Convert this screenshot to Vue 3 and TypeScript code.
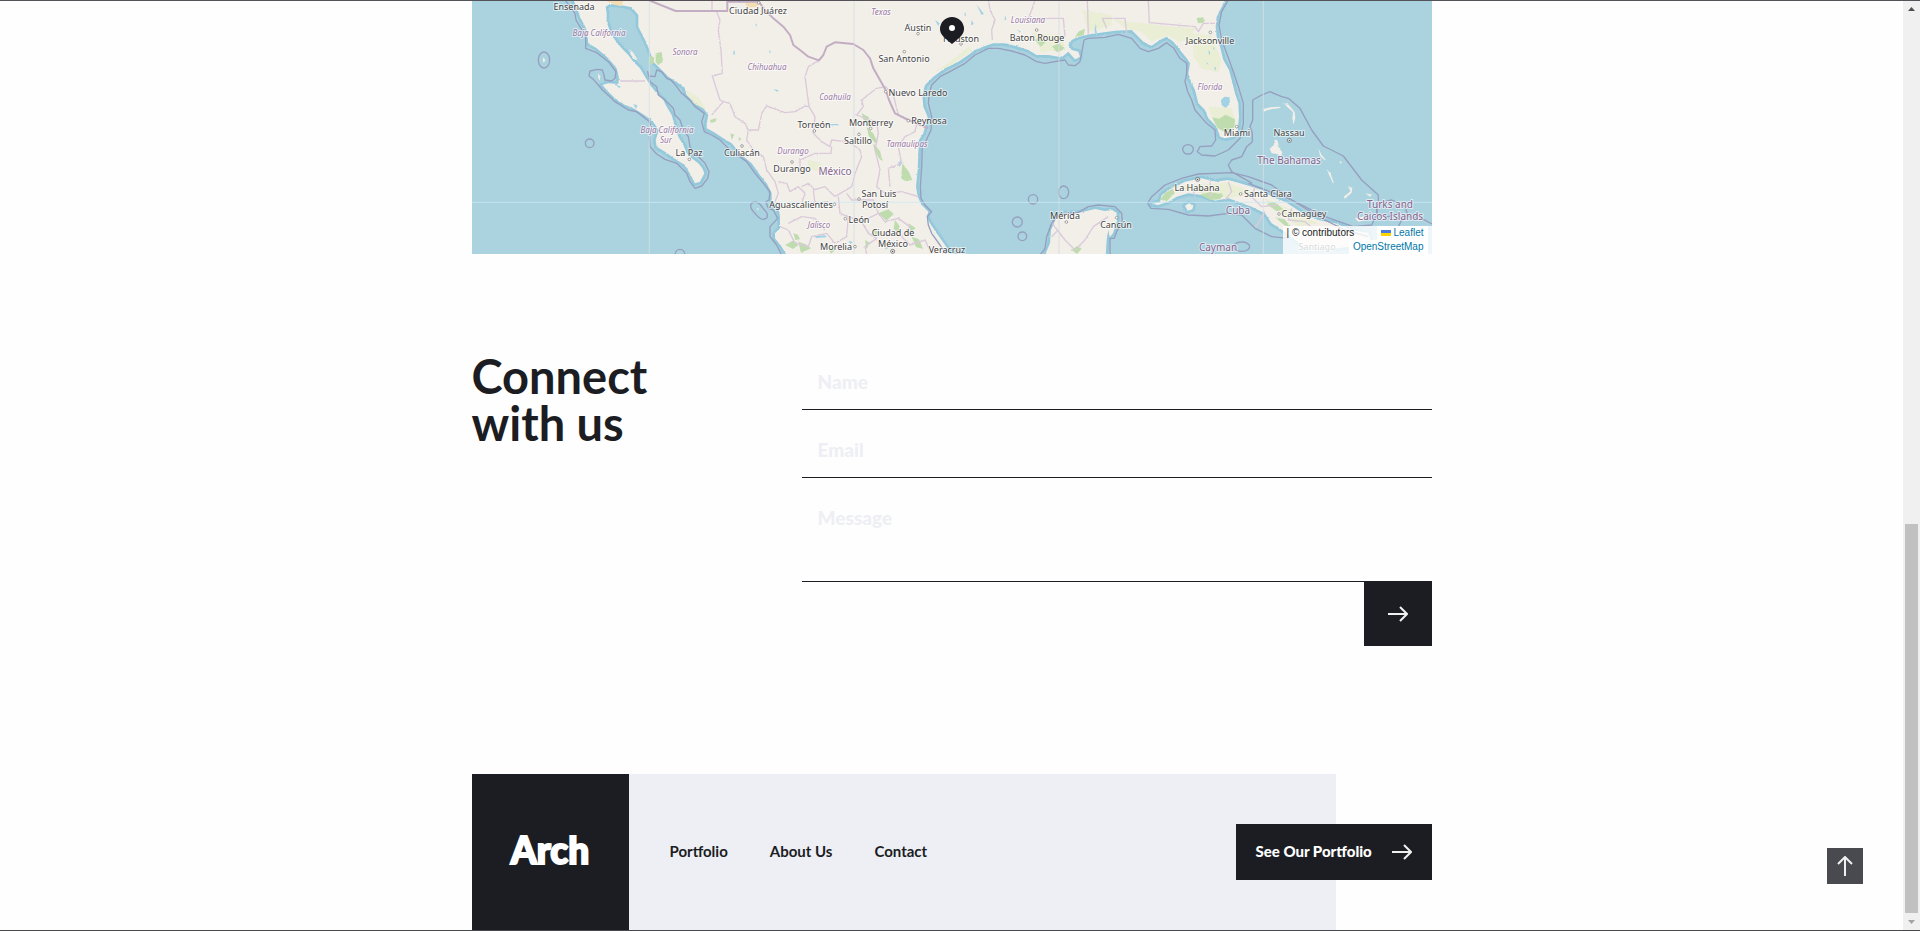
<script setup lang="ts">
import { ref } from 'vue'

type Kind = 'city' | 'state' | 'country'
interface Label { text: string; x: number; y: number; kind: Kind }

const labels: Label[] = [
  { text: 'Ensenada', x: 102, y: 9, kind: 'city' },
  { text: 'Ciudad Juárez', x: 286, y: 13, kind: 'city' },
  { text: 'La Paz', x: 217, y: 155, kind: 'city' },
  { text: 'Culiacán', x: 270, y: 155, kind: 'city' },
  { text: 'Durango', x: 320, y: 171, kind: 'city' },
  { text: 'Aguascalientes', x: 329, y: 207, kind: 'city' },
  { text: 'Torreón', x: 342, y: 127, kind: 'city' },
  { text: 'Monterrey', x: 399, y: 125, kind: 'city' },
  { text: 'Saltillo', x: 386, y: 143, kind: 'city' },
  { text: 'Reynosa', x: 457, y: 123, kind: 'city' },
  { text: 'Nuevo Laredo', x: 446, y: 95, kind: 'city' },
  { text: 'San Antonio', x: 432, y: 61, kind: 'city' },
  { text: 'Austin', x: 446, y: 30, kind: 'city' },
  { text: 'Houston', x: 489, y: 41, kind: 'city' },
  { text: 'Baton Rouge', x: 565, y: 40, kind: 'city' },
  { text: 'San Luis', x: 407, y: 196, kind: 'city' },
  { text: 'Potosí', x: 403, y: 207, kind: 'city' },
  { text: 'León', x: 387, y: 222, kind: 'city' },
  { text: 'Ciudad de', x: 421, y: 235, kind: 'city' },
  { text: 'México', x: 421, y: 246, kind: 'city' },
  { text: 'Morelia', x: 364, y: 249, kind: 'city' },
  { text: 'Veracruz', x: 475, y: 252, kind: 'city' },
  { text: 'Mérida', x: 593, y: 218, kind: 'city' },
  { text: 'Cancún', x: 644, y: 227, kind: 'city' },
  { text: 'Jacksonville', x: 738, y: 43, kind: 'city' },
  { text: 'Miami', x: 765, y: 135, kind: 'city' },
  { text: 'Nassau', x: 817, y: 135, kind: 'city' },
  { text: 'La Habana', x: 725, y: 190, kind: 'city' },
  { text: 'Santa Clara', x: 796, y: 196, kind: 'city' },
  { text: 'Camagüey', x: 832, y: 216, kind: 'city' },
  { text: 'Santiago', x: 845, y: 249, kind: 'city' },
  { text: 'Baja California', x: 127, y: 35, kind: 'state' },
  { text: 'Baja California', x: 195, y: 132, kind: 'state' },
  { text: 'Sur', x: 194, y: 142, kind: 'state' },
  { text: 'Sonora', x: 213, y: 54, kind: 'state' },
  { text: 'Chihuahua', x: 295, y: 69, kind: 'state' },
  { text: 'Texas', x: 409, y: 14, kind: 'state' },
  { text: 'Louisiana', x: 556, y: 22, kind: 'state' },
  { text: 'Coahuila', x: 363, y: 99, kind: 'state' },
  { text: 'Durango', x: 321, y: 153, kind: 'state' },
  { text: 'Tamaulipas', x: 435, y: 146, kind: 'state' },
  { text: 'Jalisco', x: 347, y: 227, kind: 'state' },
  { text: 'Florida', x: 738, y: 89, kind: 'state' },
  { text: 'México', x: 363, y: 174, kind: 'country' },
  { text: 'The Bahamas', x: 817, y: 163, kind: 'country' },
  { text: 'Cuba', x: 766, y: 213, kind: 'country' },
  { text: 'Turks and', x: 918, y: 207, kind: 'country' },
  { text: 'Caicos Islands', x: 918, y: 219, kind: 'country' },
  { text: 'Cayman', x: 746, y: 250, kind: 'country' },
]

const towns: [number, number][] = [
  [673, 478], [831, 438], [881, 8], [981, 486], [1048, 393], [1217, 385], [1182, 403], [1262, 275],
  [1330, 362], [1318, 155], [1359, 101], [1488, 132], [1715, 90], [1108, 613], [1182, 597],
  [1141, 656], [1170, 740], [1804, 666], [1955, 653], [2236, 97], [2315, 380], [2327, 582], [2442, 642],
]
const capitals: [number, number][] = [[1283, 754], [2473, 421], [2198, 538]]

const mainland =
  'M325 0L335 20L345 50L358 75L365 90L370 130L395 145L430 175L455 205L462 235L460 252L430 250L412 255L430 275L450 295L480 315L500 322L530 340L560 360L582 390L572 420L575 440L600 455L635 480L660 495L680 530L690 550L705 545L718 520L712 505L700 490L680 475L665 460L655 435L640 410L630 380L620 345L605 320L595 300L575 280L555 255L540 230L525 205L505 185L490 165L470 145L450 120L435 95L425 65L425 40L422 20L435 12L465 15L500 22L520 45L520 80L530 100L545 130L555 155L565 185L585 205L610 230L640 250L658 262L665 285L690 310L715 325L730 345L725 370L725 385L745 395L775 415L800 430L830 465L860 490L885 525L905 550L920 580L920 605L940 620L945 650L945 685L930 700L930 715L950 740L968 770' +
  'L1462 770L1440 735L1415 700L1395 670L1385 650L1390 635L1370 615L1358 590L1353 560L1358 510L1360 460L1362 420L1375 400L1380 380L1388 350L1375 320L1372 285L1380 255L1405 230L1440 205L1480 185L1510 165L1530 150L1560 138L1585 130L1620 130L1660 140L1690 150L1715 165L1750 165L1790 172L1810 155L1830 178L1845 170L1840 155L1820 150L1810 135L1820 120L1840 110L1880 102L1950 92L2000 90L2020 110L2040 130L2060 137L2085 120L2105 110L2125 125L2145 150L2165 175L2175 190L2170 220L2178 245L2190 270L2200 310L2220 330L2230 355L2255 380L2265 410L2280 415L2305 410L2318 390L2322 350L2320 310L2310 280L2300 240L2292 210L2275 180L2265 140L2255 110L2252 80L2255 50L2270 20L2280 0Z'
const yucatan =
  'M1738 770L1755 730L1758 690L1775 650L1800 640L1840 639L1890 627L1920 633L1942 630L1955 640L1956 662L1944 700L1934 712L1930 690L1925 720L1922 770Z'
const cuba =
  'M2060 612L2085 605L2090 585L2120 565L2160 545L2210 535L2250 545L2290 540L2320 548L2360 560L2390 570L2420 590L2460 605L2490 625L2520 645L2560 660L2610 670L2660 690L2710 700L2720 730L2620 745L2520 740L2490 720L2460 695L2420 670L2400 640L2360 620L2320 605L2290 595L2250 602L2210 585L2170 580L2135 590L2110 605L2080 615ZM2160 617L2172 610L2185 616L2182 628L2168 632Z'
const islands =
  'M235 172l6 8l-4 8l-4-6ZM400 220l6 10l-2 10l-5-8ZM493 148l12 10l12 20l-6 2l-14-16ZM876 622l6 6l-4 3ZM2430 418l8 4l4 22l10 12l-4 12l-12-6l-16-2l-6-14l12-10ZM2392 328l24-6l28-2l-2 5l-26 3l-20 7ZM2455 310l16 4l18 22l2 18l-6 20l-3-18l2-20l-14-12ZM2532 412l6 32M2560 445l10 20l12 14l-3 2l-14-14ZM2585 506l12 16l10 28l-4-2l-12-26ZM2636 590l22-18l-10-14l14 6l-2 14l-20 18ZM2700 580l22 4l-6 6ZM2624 484l7 2l-5 6ZM2670 655l28-6l4 12l-22 4Z'

const maritime = [
  'M300 0L330 40L333 60L345 80L362 105L362 145L395 158L430 185L453 215L450 235L440 243L420 240L417 225L412 210L397 208L375 213L372 228L385 238L400 255L412 270L432 288L450 305L490 330L515 335L550 362L560 380L553 410L555 440L575 462L600 478L635 490L665 520L675 545L690 565L710 558L728 535L732 515L720 490L705 475L690 460L675 440L670 410L655 390L645 360L630 345L625 325L600 300L580 285L575 260L555 245L548 215L553 228L570 230L575 210L590 215L605 235L618 240L635 260L650 280L675 300L690 320L718 340L710 365L718 395L740 405L765 420L795 450L845 485L870 520L895 550L915 575L912 600L903 605L910 625L925 630L938 655L915 680L915 710L935 735L950 765',
  'M1445 765L1425 735L1400 700L1390 675L1387 650L1400 635L1380 615L1368 595L1366 560L1370 500L1372 440L1384 420L1398 390L1400 350L1390 310L1393 280L1400 255L1425 230L1460 212L1500 190L1530 165L1570 145L1600 145L1640 153L1680 165L1715 185L1740 190L1780 183L1800 180L1810 195L1830 197L1845 185L1850 160L1857 120L1870 115L1920 112L1960 103L2000 115L2025 145L2050 155L2080 145L2105 128L2125 143L2145 175L2165 190L2165 220L2160 245L2168 275L2180 300L2190 330L2225 370L2250 390L2252 420L2240 438L2205 440L2197 455L2210 465L2250 468L2290 450L2310 430L2325 415L2335 370L2335 310L2320 260L2305 215L2285 160L2270 120L2262 75L2270 35L2290 0',
  'M1725 765L1740 745L1745 710L1760 670L1780 645L1840 637L1870 620L1900 615L1950 620L1970 640L1972 665L1955 695L1948 715L1935 715L1935 765',
  'M2362 550L2300 515L2290 495L2300 480L2330 470L2345 440L2362 425L2362 400L2355 380L2363 360L2363 300L2390 285L2415 275L2450 290L2470 295L2505 325L2540 390L2575 438L2635 468L2690 540L2740 585L2740 605L2735 645L2770 650L2800 640L2810 660L2800 680',
  'M2048 610L2060 590L2100 555L2150 535L2200 522L2300 518L2350 530L2420 555L2480 600L2580 650L2665 680L2720 675L2735 645L2735 610L2780 600L2820 620L2830 650L2870 655L2901 672',
  'M2048 610L2058 625L2110 628L2170 645L2230 648L2290 640L2330 645L2370 685L2420 710L2470 715',
  'M2350 550L2480 600L2570 655L2640 690L2710 710',
  'M858 612Q868 600 884 612L905 638Q912 656 895 658Q884 658 870 640Q854 624 858 612Z',
]
const rings: [number, number, number, number][] = [
  [237, 180, 17, 24], [374, 430, 13, 13], [645, 762, 14, 14],
  [1704, 598, 14, 14], [1796, 577, 15, 19], [1657, 666, 15, 15], [1672, 709, 13, 13],
  [2169, 448, 16, 14], [2330, 740, 24, 14],
]
const national =
  'M550 0L632 33L787 33L787 5L881 5L900 30L925 55L955 80L975 105L985 135L1005 150L1030 170L1062 181L1075 165L1085 140L1110 127L1165 132L1195 150L1215 175L1225 205L1245 240L1262 270L1272 300L1290 340L1330 360L1390 385'
const borders = [
  'M741 0V33M755 35L765 60L760 90L768 150L772 220L742 228L752 260L765 300L775 305L740 345',
  'M465 243H540M775 305L795 310L810 350L840 370L850 390L880 390L890 340L905 318L960 338L990 335L1020 318L1032 320',
  'M1032 320L1020 230L1030 200L1062 181M1032 320L1050 350L1045 400L1070 425L1095 440L1100 420L1140 425L1165 435',
  'M850 390L845 420L865 450L895 470L905 510L930 545L940 580L930 605M940 545L965 550L975 575L1000 560L1020 580L1010 610',
  'M1005 520L1005 480L1050 460L1098 460L1100 440M1165 435L1185 450L1190 470L1170 520L1160 560L1110 590L1080 560L1045 570L1050 610L1090 605',
  'M1262 260L1235 265L1190 300L1195 320L1175 345L1200 355L1235 365L1240 400L1230 450L1245 510L1235 560L1260 580L1310 575L1360 590',
  'M1262 260L1285 285L1300 345L1355 370L1350 395L1320 410L1300 440L1310 490L1270 505L1275 560',
  'M1120 590L1125 640L1150 650L1145 710L1110 730L1085 700L1040 710L1030 740L990 730L970 690L945 680',
  'M970 670L1010 650L1050 655L1080 690M1150 650L1190 665L1240 640L1260 665L1300 655L1335 680L1310 710L1335 735L1380 720L1400 762',
  'M1190 665L1210 700L1235 715L1200 740L1205 762M1240 640L1225 600L1160 600L1145 580M1010 560L1030 550L1050 570',
  'M1570 0L1575 30L1590 60L1580 90L1582 120M1690 55L1700 30L1710 0M1690 55H1795L1800 110M1867 0L1870 105M1912 55H1980L1985 100M1912 55L1925 85M2050 0L2053 68L2190 80L2200 95L2215 70H2250',
  'M1758 665L1800 720L1830 750M1830 750L1860 720L1885 680L1930 650M1780 690L1760 710',
  'M2370 560L2360 590L2390 620L2440 615M2290 545L2300 575L2280 600M2236 540V590M2180 560L2190 590M2480 625L2470 660L2520 665L2550 690M2370 685L2400 635',
]
const forests =
  'M572 160l18-4l4 26l-14 14l-8-10ZM555 168l12 4v18l-10 4l-3-12ZM735 360l20-6l-4 12l-14 2ZM796 400l12 4l-8 16ZM820 410l10 8l-8 4ZM1312 490l20 26l10 24l-18 4l-16-8ZM1190 340l22 12l8 20l-8 10l-16-22ZM1205 380l18 18l14 26l-6 6l-20-22ZM1225 430l20 24l8 30l-10-8l-16-30ZM960 735l26-14l14 14l-16 12ZM985 700l14 4l6 14l-14 2ZM1000 725l22 8l16 12l-30 14ZM1090 745l22 4l-14 12ZM1240 640l30-12l16 14l-22 20ZM1290 660l14 18l-4 22l-14-14ZM1330 670l22 14l-14 12ZM1340 710l22 8l12 28l-20-4ZM1225 690l20 6l-12 14ZM1200 720l16 10l-12 18ZM1710 120l20-8l12 14l-14 14ZM1760 140l22-10l18 18l-24 8ZM1830 110l12-16l18-8l-4 20ZM1820 750l16-12l14 8l-14 16ZM2195 54l20-2l2 16l-18 2ZM2240 352l22 4l20-12l28 14l-2 24l-26 16l-24-14ZM2085 600l14-20l24-14l6 14l-22 22ZM2205 584l32-8l38 8l-10 14l-28 2ZM2405 612l22-6l28 22l-20 6ZM2430 652l28 6l22 24l-22-6Z'
const scrub =
  'M1940 55l50 10l60 6l60 8l80 6l-10 34l-40 6l-30-20l-50 20l-30-30l-44-8ZM2180 100l60 6l30 80l-10 30l-50-10l-24-36ZM2230 320l70 4l14 50l-60 10ZM1400 220l50-30l60-50l10 10l-60 46ZM1700 100l90 4l10 40l-70 14ZM660 270l40 20l24 40l-40-20ZM1030 480l40 10l-8 24l-34-8ZM1850 30l90 16v30l-70 20ZM2110 560l180-12l80 30l-80 16ZM2390 590l90 40l80 40l-60 10Z'
const lakes =
  'M805 152l5 2l-1 12l-4-4ZM925 268l16 2l-4 6ZM870 70l6 4l-2 6ZM912 150l6 6l-4 4ZM1050 708l30-2l6 6l-34 2ZM1150 722l14 4l-8 6ZM1086 372h34v4h-34ZM1300 485l8-4v14l-6 6ZM1410 60l14 10l-4 8ZM1520 60l6 12l-8 4ZM1535 14l22 28l-8 2ZM1330 70l8 4l-6 4ZM1620 45l4 14l-5 2ZM1658 90l10 4l-8 5ZM1890 70l6 30l-7-2ZM1500 35l4 14l-6-4ZM2268 300l10-10l16 2v20l-12 12l-12-8ZM2172 245l12 4l-4 12ZM2230 150l6 8l-4 8ZM2248 200l6 4l-4 8ZM2225 185l5 8l-4 4ZM2245 140l4 8l-5 2ZM2262 260l5 6l-5 4ZM505 312l12 4l-4 12ZM450 252l18 8l-6 4ZM1260 740l10 3l-8 6Z'

const name = ref('')
const email = ref('')
const message = ref('')
const toTop = () => window.scrollTo({ top: 0, behavior: 'smooth' })
</script>

<template>
  <div class="shell">
    <main class="page">
      <section class="map" aria-label="Office locations">
        <svg class="map-art" viewBox="0 0 960 253" role="img" aria-label="Map of Mexico and the Gulf">
          <defs>
            <filter id="rough" x="0" y="0" width="100%" height="100%">
              <feTurbulence type="fractalNoise" baseFrequency="0.12" numOctaves="3" seed="4" />
              <feDisplacementMap in="SourceGraphic" scale="6" xChannelSelector="R" yChannelSelector="G" />
            </filter>
          </defs>
          <rect width="960" height="253" class="sea" />
          <g transform="translate(-7 -1) scale(0.333333)">
            <g filter="url(#rough)">
              <rect x="21" y="3" width="2880" height="759" fill="none" />
              <path class="shallow" :d="mainland" />
              <path class="shallow" :d="yucatan" />
              <path class="shallow" :d="cuba" />
              <path class="land" :d="mainland" />
              <path class="land" :d="yucatan" />
              <path class="land" :d="cuba" />
              <path class="land" :d="islands" />
              <path class="scrub" :d="scrub" />
              <path class="forest" :d="forests" />
              <path class="sand" d="M425 3h50l-5 16l-18 -4ZM840 8h45l-10 14h-30Z" />
              <path class="lake" :d="lakes" />
              <path v-for="b in borders" :key="b" class="border" :d="b" />
            </g>
            <path class="national" :d="national" />
            <path v-for="m in maritime" :key="m" class="maritime" :d="m" />
            <ellipse v-for="(r, i) in rings" :key="i" class="maritime" :cx="r[0]" :cy="r[1]" :rx="r[2]" :ry="r[3]" />
            <path class="seam" d="M553 0V765M1167 0V765M1782 0V765M2395 0V765" />
            <path class="seam light" d="M20 607H2905" />
            <circle v-for="(t, i) in towns" :key="i" class="town" :cx="t[0]" :cy="t[1]" r="4" />
            <g v-for="(t, i) in capitals" :key="i">
              <circle class="capital" :cx="t[0]" :cy="t[1]" r="6" />
              <circle class="dot" :cx="t[0]" :cy="t[1]" r="2" />
            </g>
          </g>
          <text v-for="(l, i) in labels" :key="i" :class="['label', l.kind]" :x="l.x" :y="l.y">{{ l.text }}</text>
          <g>
            <path class="pin" d="M480 16a12 12 0 0 1 12 12c0 6-5 9-12 15c-7-6-12-9-12-15a12 12 0 0 1 12-12z" />
            <circle cx="480" cy="27" r="3" class="pin-eye" />
          </g>
        </svg>
        <div class="attribution">
          <span class="contrib">| © contributors</span>
          <a class="credit" href="#leaflet">
            <svg class="flag" viewBox="0 0 10 6" aria-hidden="true"><path fill="#4c7be1" d="M0 0h10v3H0z" /><path fill="#ffd500" d="M0 3h10v3H0z" /></svg>
            Leaflet
          </a>
          <a class="credit osm" href="#openstreetmap">OpenStreetMap</a>
        </div>
      </section>

      <section class="connect">
        <h2 class="title">Connect<br />with us</h2>
        <form class="form" @submit.prevent>
          <input v-model="name" class="field" type="text" placeholder="Name" aria-label="Name" />
          <input v-model="email" class="field" type="email" placeholder="Email" aria-label="Email" />
          <textarea v-model="message" class="field area" placeholder="Message" aria-label="Message"></textarea>
          <button class="send" type="submit" aria-label="Send message">
            <svg class="arrow" viewBox="0 0 20 16" aria-hidden="true"><path d="M0 8h19M12 1l7 7l-7 7" /></svg>
          </button>
        </form>
      </section>

      <footer class="footer">
        <a class="logo" href="#home">Arch</a>
        <nav class="nav">
          <a href="#portfolio">Portfolio</a>
          <a href="#about">About Us</a>
          <a href="#contact">Contact</a>
        </nav>
        <a class="cta" href="#portfolio">
          <span>See Our Portfolio</span>
          <svg class="arrow" viewBox="0 0 20 16" aria-hidden="true"><path d="M0 8h19M12 1l7 7l-7 7" /></svg>
        </a>
      </footer>

      <button class="to-top" type="button" aria-label="Back to top" @click="toTop">
        <svg viewBox="0 0 16 20" aria-hidden="true"><path d="M8 20V1M1 8l7-7l7 7" /></svg>
      </button>
    </main>

    <div class="scrollbar" aria-hidden="true">
      <svg class="tick" viewBox="0 0 17 17"><path d="M5 10h7l-3.500-4z" fill="#505050" /></svg>
      <div class="track"><div class="thumb"></div></div>
      <svg class="tick" viewBox="0 0 17 17"><path d="M5 7h7l-3.500 4z" fill="#a3a3a3" /></svg>
    </div>
  </div>
</template>

<style>
body {
  margin: 0;
  background: #fefefe;
}
</style>

<style scoped>
* {
  box-sizing: border-box;
}
.shell {
  display: flex;
  min-height: 100vh;
  border-top: 1px solid #555257;
  border-bottom: 1px solid #48494c;
  background: #fefefe;
  color: #1b1d23;
  font-family: Lato, "Open Sans", sans-serif;
}
.page {
  flex: 1;
  display: flex;
  flex-direction: column;
  align-items: center;
}
.map,
.connect,
.footer {
  width: 100%;
  max-width: 960px;
}
.map {
  position: relative;
}
.map-art {
  display: block;
  width: 100%;
}
.sea { fill: #aad3df; }
.land { fill: #f2efe9; }
.shallow { fill: none; stroke: #94c8db; stroke-width: 16; stroke-linejoin: round; }
.scrub { fill: #e3eccb; opacity: 0.65; }
.forest { fill: #bfdcae; }
.sand { fill: #f5ddb3; }
.lake { fill: #a2d3e4; }
.border { fill: none; stroke: #dacada; stroke-width: 4; stroke-linejoin: round; }
.national { fill: none; stroke: #c3adc3; stroke-width: 6; stroke-linejoin: round; }
.maritime { fill: none; stroke: #969fbe; stroke-width: 4; stroke-linejoin: round; }
.seam { fill: none; stroke: #d5dfe3; stroke-width: 3; opacity: 0.8; }
.seam.light { stroke: #cbe9f4; }
.town { fill: #fff; stroke: #777; stroke-width: 2; }
.capital { fill: #eee; stroke: #555; stroke-width: 2; }
.dot { fill: #333; }
.label {
  font-family: "Noto Sans", sans-serif;
  text-anchor: middle;
  paint-order: stroke;
  stroke: rgb(255 255 255 / 60%);
  stroke-width: 2px;
  stroke-linejoin: round;
}
.city { font-size: 9px; fill: #444; }
.state { font-size: 8px; font-style: italic; fill: #9a78a4; }
.country { font-size: 10px; fill: #85648f; }
.pin { fill: #1b1d23; }
.pin-eye { fill: #fff; }
.attribution {
  position: absolute;
  right: 0;
  bottom: 0;
  display: grid;
  grid-template-columns: 1fr auto;
  width: 149px;
  padding-right: 4px;
  background: rgb(255 255 255 / 80%);
  font: 10px/14px "Liberation Sans", Arial, sans-serif;
}
.contrib {
  padding-left: 4px;
}
.credit {
  padding: 0 4px;
  background: #fff;
  color: #0078a8;
  text-decoration: none;
}
.osm {
  grid-column: 1 / 3;
  justify-self: end;
}
.flag {
  width: 10px;
  height: 6px;
}
.connect {
  display: flex;
  justify-content: space-between;
  padding-top: 98px;
}
.title {
  margin: 1px 0 0;
  font-size: 47px;
  font-weight: 700;
  line-height: 47px;
}
.form {
  display: flex;
  flex-direction: column;
  width: 100%;
  max-width: 630px;
}
.field {
  width: 100%;
  height: 68px;
  padding: 12px 16px 0;
  border: 0;
  border-bottom: 1px solid #1b1d23;
  border-radius: 0;
  outline: 0;
  background: transparent;
  color: #1b1d23;
  font: 900 19px/24px Lato, "Open Sans", sans-serif;
}
.field:first-child {
  height: 58px;
  padding-top: 2px;
}
.field::placeholder {
  color: #eeeff4;
  opacity: 1;
}
.area {
  display: block;
  height: 104px;
  padding-top: 28px;
  resize: none;
}
.send {
  align-self: flex-end;
  display: grid;
  place-items: center;
  width: 68px;
  height: 64px;
  padding: 0;
  border: 0;
  background: #1b1d23;
}
.arrow {
  width: 20px;
  height: 16px;
}
.arrow path,
.to-top path {
  fill: none;
  stroke: #f0f0f0;
  stroke-width: 2;
}
.footer {
  display: flex;
  align-items: center;
  margin-top: auto;
  background: linear-gradient(#eeeff4, #eeeff4) no-repeat 0 0 / 90% 100%;
}
.logo {
  display: grid;
  place-items: center;
  width: 157px;
  height: 156px;
  padding-bottom: 6px;
  background: #1b1d23;
  color: #fff;
  font-size: 37px;
  font-weight: 900;
  text-decoration: none;
  -webkit-text-stroke: 2px #fff;
}
.nav {
  display: flex;
  gap: 42px;
  margin-left: 41px;
  padding-bottom: 2px;
}
.nav a {
  color: #1b1d23;
  font-size: 15px;
  font-weight: 700;
  line-height: 24px;
  text-decoration: none;
}
.cta {
  display: flex;
  align-items: center;
  justify-content: space-between;
  width: 196px;
  height: 56px;
  margin-left: auto;
  padding: 0 20px;
  background: #1b1d23;
  color: #fff;
  font-size: 15px;
  font-weight: 900;
  text-decoration: none;
}
.cta span {
  padding-bottom: 2px;
}
.to-top {
  position: fixed;
  right: 57px;
  bottom: 47px;
  display: grid;
  place-items: center;
  width: 36px;
  height: 36px;
  padding: 0;
  border: 0;
  background: #494a4f;
}
.to-top svg {
  width: 16px;
  height: 20px;
}
.scrollbar {
  display: flex;
  flex-direction: column;
  width: 17px;
  background: #f0f0f0;
}
.tick {
  width: 17px;
  height: 17px;
}
.track {
  flex: 1;
  display: flex;
  flex-direction: column;
  justify-content: flex-end;
  padding: 0 2px;
}
.thumb {
  height: 43.5%;
  background: #c1c1c1;
}
</style>
